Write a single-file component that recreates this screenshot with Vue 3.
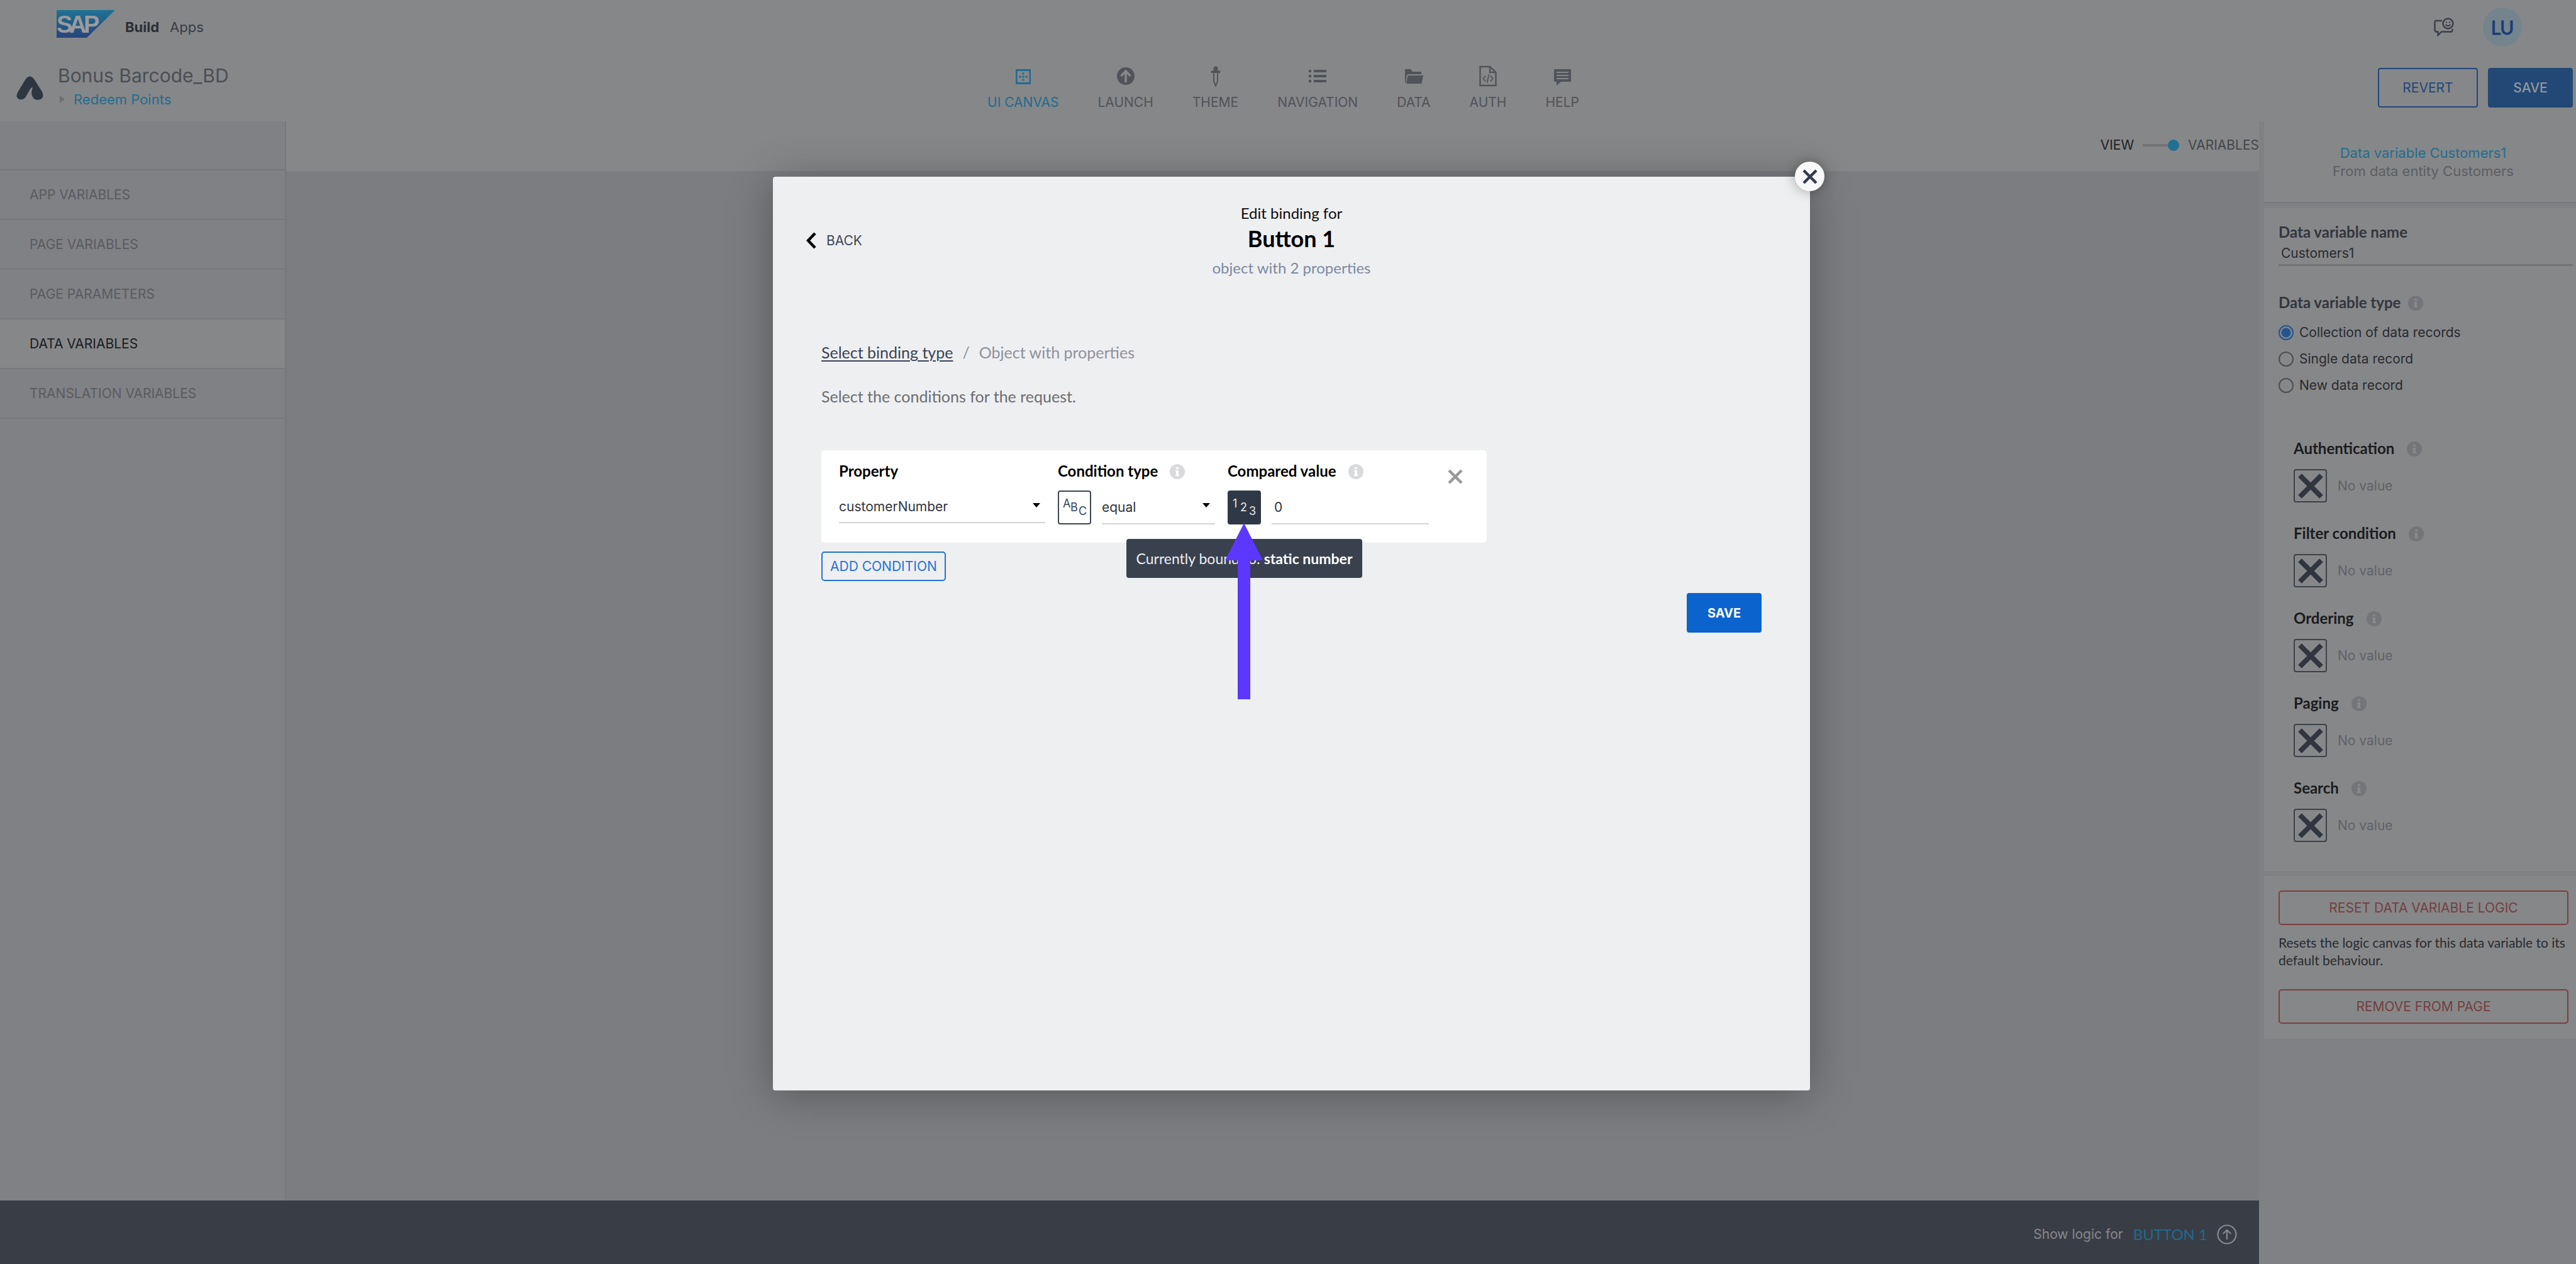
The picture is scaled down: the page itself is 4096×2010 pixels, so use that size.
<script setup>
import { ref } from 'vue'

const navItems = [
  { id: 'canvas', label: 'UI CANVAS', active: true },
  { id: 'launch', label: 'LAUNCH' },
  { id: 'theme', label: 'THEME' },
  { id: 'navigation', label: 'NAVIGATION' },
  { id: 'data', label: 'DATA' },
  { id: 'auth', label: 'AUTH' },
  { id: 'help', label: 'HELP' },
]

const variableKinds = [
  { label: 'APP VARIABLES' },
  { label: 'PAGE VARIABLES' },
  { label: 'PAGE PARAMETERS' },
  { label: 'DATA VARIABLES', active: true },
  { label: 'TRANSLATION VARIABLES' },
]

const recordTypes = ['Collection of data records', 'Single data record', 'New data record']
const bindings = ['Authentication', 'Filter condition', 'Ordering', 'Paging', 'Search']

const variableName = ref('Customers1')
const recordType = ref(recordTypes[0])
const property = ref('customerNumber')
const condition = ref('equal')
const compared = ref('0')
</script>

<template>
  <div class="app">
    <header class="header">
      <div class="topbar">
        <a class="brand" href="#">
          <svg class="sap" viewBox="0 0 93 44" aria-label="SAP">
            <defs>
              <linearGradient id="sapfill" x1="0" y1="0" x2="0" y2="1">
                <stop offset="0" stop-color="#1f7294" />
                <stop offset="1" stop-color="#27447d" />
              </linearGradient>
            </defs>
            <path d="M0 0H93L48 44H0Z" fill="url(#sapfill)" />
            <g class="sap-text"><text x="0" y="36">S</text><text x="20" y="36">A</text><text x="43" y="36">P</text></g>
          </svg>
          <span class="brand-name"><b>Build</b><span>Apps</span></span>
        </a>
        <div class="account">
          <button class="plain" aria-label="Feedback">
            <svg class="feedback" viewBox="0 0 32 30" fill="none" stroke="#3a3f48" stroke-width="2.4">
              <path d="M13 5H4Q1.500 5 1.500 8V19Q1.500 22.500 4 22.500H6.500V28L12 22.500H27Q29.500 22.500 29.500 20V18" />
              <circle cx="22.500" cy="9.500" r="8" />
              <path d="M18.500 11Q22.500 15.500 26.500 11M20 6.500V8.500M25 6.500V8.500" stroke-width="2" />
            </svg>
          </button>
          <button class="avatar">LU</button>
        </div>
      </div>

      <div class="projectbar">
        <div class="project">
          <svg class="mark" viewBox="0 0 43 38">
            <path d="M2 26L14 6Q21.500 -5 29 6L41 25Q45 34 38 37Q31 39.500 27 35Q22 29 26 18Q23 18 21 22L15 33Q11 38.500 5 37Q-2 34 2 26Z" fill="#2e3641" />
          </svg>
          <div class="titles">
            <h1>Bonus Barcode_BD</h1>
            <a href="#"><i class="crumb-arrow"></i>Redeem Points</a>
          </div>
        </div>
        <nav class="nav">
          <a v-for="n in navItems" :key="n.id" href="#" :class="{ active: n.active }">
            <svg viewBox="0 0 34 34" fill="currentColor">
              <template v-if="n.id === 'canvas'">
                <path d="M5 6H29V30H5ZM7.500 9V27H26.500V9Z" fill-rule="evenodd" />
                <path d="M15.500 11.500h3v3h-3zM15.500 16.500h3v3h-3zM15.500 21.500h3v3h-3zM10.500 16.500h3v3h-3zM20.500 16.500h3v3h-3z" />
              </template>
              <template v-else-if="n.id === 'launch'">
                <circle cx="17" cy="17" r="14" />
                <path d="M17 27V9M9.500 17L17 9L24.500 17" fill="none" stroke="#868788" stroke-width="3.500" />
              </template>
              <template v-else-if="n.id === 'theme'">
                <path d="M13.500 5a3.500 3.500 0 0 1 7 0V8.500H24.500V12H9.500V8.500H13.500Z" />
                <path d="M14 12V25L17 32.500L20 25V12" fill="none" stroke="currentColor" stroke-width="2" />
              </template>
              <template v-else-if="n.id === 'navigation'">
                <path d="M3 7h4v4H3zM3 15h4v4H3zM3 23h4v4H3zM11 7h20v4H11zM11 15h20v4H11zM11 23h20v4H11z" />
              </template>
              <template v-else-if="n.id === 'data'">
                <path d="M3 6H12L15 10H29V14H9Q6 14 5.500 17L4 28Q3 28 3 27Z" />
                <path d="M9.500 16H32L29.500 29H5L7 18Q7.500 16 9.500 16Z" />
              </template>
              <template v-else-if="n.id === 'auth'">
                <path d="M4.500 2H20L29.500 11V32H4.500ZM20 2V11H29.500" fill="none" stroke="currentColor" stroke-width="2.400" />
                <path d="M13 16.500L9.500 21L13 25.500M21 16.500L24.500 21L21 25.500M18.500 14.500L15.500 27.500" fill="none" stroke="currentColor" stroke-width="1.800" />
              </template>
              <template v-else>
                <path d="M5 6H30Q31 6 31 7V25Q31 26 30 26H15L8 32V26H5Q4 26 4 25V7Q4 6 5 6ZM8 10V12H27V10ZM8 15V17H27V15ZM8 20V22H27V20Z" fill-rule="evenodd" />
              </template>
            </svg>
            <span>{{ n.label }}</span>
          </a>
        </nav>
        <div class="project-actions">
          <button class="btn-outline">REVERT</button>
          <button class="btn-solid">SAVE</button>
        </div>
      </div>
    </header>

    <div class="workspace">
      <div class="left">
        <div class="stage">
          <aside class="kinds">
            <div class="kinds-head"></div>
            <a v-for="k in variableKinds" :key="k.label" href="#" :class="{ active: k.active }">{{ k.label }}</a>
          </aside>
          <main class="main">
            <div class="toolbar">
              <span class="view">VIEW</span>
              <span class="track"></span><span class="knob"></span>
              <span class="vars">VARIABLES</span>
            </div>
          </main>
        </div>
        <footer class="footer">
          <span class="show">Show logic for</span>
          <a href="#">BUTTON 1</a>
          <svg viewBox="0 0 32 32" fill="none" stroke="#87898c" stroke-width="2.200">
            <circle cx="16" cy="16" r="14.500" />
            <path d="M16 24V9M9.500 15L16 9L22.500 15" />
          </svg>
        </footer>
      </div>

      <aside class="panel">
        <section class="summary">
          <a href="#">Data variable Customers1</a>
          <p>From data entity Customers</p>
        </section>

        <section class="props">
          <label class="field-label" for="varname">Data variable name</label>
          <input id="varname" v-model="variableName" class="name-input" type="text" />
          <h3 class="field-label type-label">Data variable type
            <svg class="info dim" viewBox="0 0 24 24"><circle cx="12" cy="12" r="12" /><path d="M10 5h4v3h-4zM9 10h5v7h1v2H9v-2h1v-5H9z" /></svg>
          </h3>
          <div class="radios">
            <label v-for="r in recordTypes" :key="r"><input v-model="recordType" type="radio" name="rtype" :value="r" />{{ r }}</label>
          </div>
          <div class="bindings">
            <div v-for="b in bindings" :key="b" class="binding">
              <h3>{{ b }}
                <svg class="info dim" viewBox="0 0 24 24"><circle cx="12" cy="12" r="12" /><path d="M10 5h4v3h-4zM9 10h5v7h1v2H9v-2h1v-5H9z" /></svg>
              </h3>
              <div class="binding-row">
                <button class="binding-btn" :aria-label="b">
                  <svg viewBox="0 0 40 40"><path d="M3 3L37 37M37 3L3 37" stroke="#30353f" stroke-width="8" /></svg>
                </button>
                <span>No value</span>
              </div>
            </div>
          </div>
        </section>

        <section class="danger">
          <button>RESET DATA VARIABLE LOGIC</button>
          <p>Resets the logic canvas for this data variable to its default behaviour.</p>
          <button>REMOVE FROM PAGE</button>
        </section>
      </aside>
    </div>

    <div class="backdrop">
      <div class="dialog" role="dialog" aria-labelledby="dlg-title">
        <button class="close" aria-label="Close">
          <svg viewBox="0 0 24 24"><path d="M2 2L22 22M22 2L2 22" stroke="#333a4b" stroke-width="4.500" /></svg>
        </button>
        <div class="dialog-head">
          <button class="back">
            <svg viewBox="0 0 17 27" fill="none" stroke="#000" stroke-width="4.500"><path d="M15 2L4 13.500L15 25" /></svg>
            BACK
          </button>
          <div class="dialog-title">
            <p>Edit binding for</p>
            <h2 id="dlg-title">Button 1</h2>
            <p class="muted">object with 2 properties</p>
          </div>
        </div>
        <div class="dialog-body">
          <div class="crumbs">
            <a href="#">Select binding type</a><span>/</span><span>Object with properties</span>
          </div>
          <p class="lead">Select the conditions for the request.</p>

          <div class="condition">
            <div class="col property">
              <label for="prop">Property</label>
              <div class="select short">
                <select id="prop" v-model="property"><option>customerNumber</option></select>
                <i></i>
              </div>
            </div>
            <div class="col ctype">
              <label for="cond">Condition type
                <svg class="info" viewBox="0 0 24 24"><circle cx="12" cy="12" r="12" /><path d="M10 5h4v3h-4zM9 10h5v7h1v2H9v-2h1v-5H9z" /></svg>
              </label>
              <div class="value-row">
                <button class="type-btn" aria-label="Text binding">
                  <svg viewBox="0 0 53 54"><text x="8" y="27">A</text><text x="20" y="33">B</text><text x="33" y="39">C</text></svg>
                </button>
                <div class="select">
                  <select id="cond" v-model="condition"><option>equal</option></select>
                  <i></i>
                </div>
              </div>
            </div>
            <div class="col compared">
              <label for="cmp">Compared value
                <svg class="info" viewBox="0 0 24 24"><circle cx="12" cy="12" r="12" /><path d="M10 5h4v3h-4zM9 10h5v7h1v2H9v-2h1v-5H9z" /></svg>
              </label>
              <div class="value-row">
                <div class="anchor">
                  <button class="type-btn dark" aria-label="Number binding">
                    <svg viewBox="0 0 53 54"><text x="8" y="27">1</text><text x="20" y="33">2</text><text x="34" y="39">3</text></svg>
                  </button>
                  <div class="tooltip">Currently bound to: <b>static number</b></div>
                  <svg class="pointer" viewBox="0 0 60 280"><path d="M30 0L60 59H40V280H20V59H0Z" fill="#5b37ff" /></svg>
                </div>
                <input id="cmp" v-model="compared" type="text" />
              </div>
            </div>
            <button class="remove" aria-label="Remove condition">
              <svg viewBox="0 0 24 24"><path d="M2 2L22 22M22 2L2 22" stroke="#999" stroke-width="4.500" /></svg>
            </button>
          </div>

          <button class="add">ADD CONDITION</button>
          <div class="dialog-foot"><button class="save">SAVE</button></div>
        </div>
      </div>
    </div>
  </div>
</template>

<style>
body {
  margin: 0;
  background: #7c7d80;
}
</style>

<style scoped>
.app {
  position: relative;
  display: flex;
  flex-direction: column;
  min-height: 100vh;
  font-family: Inter, "Open Sans", sans-serif;
  font-size: 21px;
  line-height: 24px;
  color: #282b31;
}
.app *, .app { box-sizing: border-box; }
h1, h2, h3, p { margin: 0; font-weight: 400; }
button, input, select { font: inherit; color: inherit; margin: 0; padding: 0; }
button { cursor: pointer; background: none; border: 0; }
a { color: inherit; text-decoration: none; }
svg { display: block; flex: none; }

/* header */
.header { background: #868788; color: #50535a; }
.topbar {
  height: 86px;
  padding: 0 86px 0 90px;
  display: flex;
  align-items: center;
  justify-content: space-between;
}
.brand { display: flex; align-items: center; gap: 16px; }
.sap { width: 93px; height: 44px; margin-bottom: 10px; }
.sap-text { font: 700 38px "Liberation Sans", Arial, sans-serif; fill: #9a9b9c; }
.brand-name { display: flex; gap: 17px; font-size: 22px; }
.brand-name b { color: #2b2f38; font-weight: 700; }
.brand-name span { color: #383d47; }
.account { display: flex; align-items: center; gap: 46px; }
.feedback { width: 32px; height: 30px; }
.avatar {
  width: 62px;
  height: 62px;
  border-radius: 50%;
  background: #74848d;
  color: #1c3c76;
  font: 400 30px Lato, sans-serif;
  -webkit-text-stroke: 1px currentColor;
}
.projectbar {
  height: 107px;
  display: grid;
  grid-template-columns: 1fr auto 1fr;
  align-items: center;
}
.project { display: flex; align-items: center; gap: 23px; padding-left: 26px; }
.mark { width: 43px; height: 38px; }
.titles { display: flex; flex-direction: column; gap: 6px; padding-bottom: 2px; }
.titles h1 { font-size: 30px; line-height: 32px; color: #4b4e55; }
.titles a {
  display: flex;
  align-items: center;
  gap: 14px;
  font-size: 22px;
  line-height: 32px;
  color: #246d8f;
}
.crumb-arrow {
  margin-left: 3px;
  border-left: 8px solid #6c6e72;
  border-top: 6px solid transparent;
  border-bottom: 6px solid transparent;
}
.nav { display: flex; gap: 62px; margin-right: 15px; }
.nav a { display: flex; flex-direction: column; align-items: center; gap: 13px; }
.nav svg { width: 34px; height: 34px; }
.nav .active { color: #1f6c90; }
.project-actions { display: flex; justify-content: flex-end; gap: 16px; padding-right: 5px; }
.btn-outline, .btn-solid { height: 63px; border-radius: 4px; }
.btn-outline { width: 159px; border: 2px solid #22477b; color: #22477b; }
.btn-solid { width: 135px; background: #224875; color: #93979c; font-weight: 500; }

/* workspace */
.workspace { flex: 1; display: grid; grid-template-columns: 1fr 504px; }
.left { display: flex; flex-direction: column; }
.stage { flex: 1; display: flex; }
.kinds { width: 455px; background: #808184; border-right: 2px solid #77787b; color: #595b61; }
.kinds-head { height: 78px; border-bottom: 2px solid #77787b; }
.kinds a {
  display: flex;
  align-items: center;
  height: 79px;
  padding-left: 47px;
  border-bottom: 2px solid #77787b;
}
.kinds .active { background: #868788; color: #1a1c22; }
.main { flex: 1; background: #7c7d80; }
.toolbar {
  height: 79px;
  padding-bottom: 3px;
  background: #868788;
  display: flex;
  align-items: center;
  justify-content: flex-end;
}
.view { color: #202227; }
.vars { color: #43464c; }
.track { width: 40px; height: 4px; margin-left: 14px; background: #727375; }
.knob { width: 18px; height: 18px; margin-right: 14px; border-radius: 50%; background: #1f7092; }
.footer {
  height: 101px;
  padding: 6px 35px 0 0;
  background: #393d46;
  display: flex;
  align-items: center;
  justify-content: flex-end;
}
.show { color: #87898c; margin-right: 16px; }
.footer a { font: 400 24px/24px Lato, sans-serif; color: #206a8c; margin-right: 15px; }
.footer svg { width: 32px; height: 32px; }

/* right panel */
.panel { padding-left: 8px; background: #808184; display: flex; flex-direction: column; gap: 8px; }
.panel section { background: #868788; }
.panel .summary {
  padding: 36px 0 34px 10px;
  border-bottom: 2px solid #78797b;
  font-size: 22px;
  line-height: 29px;
  text-align: center;
}
.summary a { color: #246d8f; }
.summary p { color: #5c5e63; }
.props { display: flex; flex-direction: column; padding: 23px 5px 46px 23px; }
.field-label, .binding h3 {
  display: flex;
  align-items: center;
  font: 700 24px/30px Lato, sans-serif;
  color: #32363e;
}
.type-label { gap: 12px; margin-top: 43px; }
.name-input {
  height: 39px;
  padding: 0 4px;
  border: 0;
  border-bottom: 3px solid #717275;
  background: none;
}
.info { width: 24px; height: 24px; fill: #d9dadd; margin-top: 2px; }
.info path { fill: #fff; }
.info.dim { fill: #747579; }
.info.dim path { fill: #88898b; }
.radios { margin-top: 12px; }
.radios label { display: flex; align-items: center; gap: 9px; height: 42px; }
.radios input {
  appearance: none;
  width: 24px;
  height: 24px;
  border: 2px solid #4c4e53;
  border-radius: 50%;
}
.radios input:checked {
  border-color: #22558f;
  background: radial-gradient(circle, #22558f 7px, transparent 8px);
}
.bindings {
  margin: 64px 0 0 24px;
  display: flex;
  flex-direction: column;
  gap: 34px;
}
.binding h3 { gap: 20px; color: #1a1c20; }
.binding-row { display: flex; align-items: center; gap: 17px; margin-top: 18px; color: #5f6268; }
.binding-btn {
  width: 53px;
  height: 53px;
  display: grid;
  place-items: center;
  border: 2px solid #3d4148;
  border-radius: 4px;
}
.binding-btn svg { width: 40px; height: 40px; }
.danger { display: flex; flex-direction: column; padding: 23px 12px 24px 23px; }
.danger button { height: 55px; border: 2px solid #7b3f40; border-radius: 5px; color: #733f42; }
.danger p { margin: 14px 0 32px; font: 400 21px/28px Lato, sans-serif; }

/* dialog */
.backdrop {
  position: absolute;
  inset: 0;
  display: flex;
  padding: 281px 1218px 276px 1229px;
}
.dialog {
  position: relative;
  flex: 1;
  background: #eeeff1;
  border-radius: 4px;
  box-shadow: 0 6px 70px rgba(0, 0, 0, 0.3);
  font-family: Lato, sans-serif;
  font-size: 24px;
  line-height: 32px;
  color: #0c0c0e;
}
.close {
  position: absolute;
  top: -24px;
  right: -23px;
  width: 47px;
  height: 47px;
  display: grid;
  place-items: center;
  border-radius: 50%;
  background: #f8f8f8;
  box-shadow: 0 0 20px rgba(0, 0, 0, 0.35);
}
.close svg { width: 24px; height: 24px; }
.dialog-head {
  display: grid;
  grid-template-columns: 1fr auto 1fr;
  align-items: center;
  padding-top: 42px;
}
.back {
  justify-self: start;
  display: flex;
  align-items: center;
  gap: 16px;
  margin-left: 52px;
  font: 400 21px/24px Inter, sans-serif;
  color: #3d4656;
}
.back svg { width: 17px; height: 27px; }
.dialog-title { text-align: center; }
.dialog-title h2 { font-size: 36px; line-height: 48px; font-weight: 700; color: #000; }
.dialog-title .muted { margin-top: 7px; color: #7c89a3; }
.dialog-body { padding: 102px 77px 0; display: flex; flex-direction: column; align-items: flex-start; }
.crumbs { display: flex; gap: 15px; font-size: 25px; color: #8f929b; }
.crumbs a { color: #3a4355; text-decoration: underline; text-underline-offset: 3px; text-decoration-thickness: 2px; }
.lead { margin-top: 38px; font-size: 25px; color: #6b6d70; }
.condition {
  display: flex;
  align-items: flex-start;
  margin-top: 70px;
  padding: 18px 38px 29px 28px;
  background: #fff;
  border-radius: 5px;
}
.col { margin-right: 20px; }
.property { width: 328px; }
.ctype { width: 250px; }
.compared { width: 320px; margin-right: 30px; }
.col label { display: flex; align-items: center; gap: 19px; font-weight: 700; line-height: 30px; margin-bottom: 16px; color: #000; }
.value-row { display: flex; gap: 17px; height: 54px; }
.type-btn { width: 53px; height: 54px; border: 2px solid #3c4657; border-radius: 4px; }
.type-btn svg { width: 53px; height: 54px; margin: -2px; fill: #3c4657; }
.type-btn text { font: 400 18px Inter, sans-serif; }
.type-btn.dark { background: #2f3847; border-color: #2f3847; }
.type-btn.dark svg { fill: #e8eaee; }
.select { position: relative; flex: 1; display: flex; height: 54px; }
.select.short { height: 52px; }
.select select, .value-row > input {
  appearance: none;
  flex: 1;
  min-width: 0;
  width: 100%;
  background: none;
  border: 0;
  border-bottom: 2px solid #d3d4d6;
  border-radius: 0;
  font: 400 21px Inter, sans-serif;
  color: #33353a;
}
.value-row > input { padding-left: 4px; }
.select i {
  position: absolute;
  right: 8px;
  top: 20px;
  border-top: 7px solid #000;
  border-left: 6px solid transparent;
  border-right: 6px solid transparent;
}
.anchor { position: relative; }
.tooltip {
  position: absolute;
  top: 77px;
  left: 50%;
  transform: translateX(-50%);
  padding: 0 16px;
  line-height: 62px;
  white-space: nowrap;
  background: #3a414e;
  border-radius: 4px;
  color: #eceef1;
  font-size: 23px;
}
.tooltip b { color: #fff; }
.pointer { position: absolute; top: 52px; left: -4px; width: 60px; height: 280px; }
.remove { margin-top: 12px; }
.remove svg { width: 24px; height: 24px; }
.add {
  height: 47px;
  padding: 0 12px;
  margin-top: 14px;
  border: 2px solid #2272d9;
  border-radius: 5px;
  font: 400 21px Inter, sans-serif;
  color: #2272d9;
}
.dialog-foot { align-self: flex-end; margin-top: 19px; }
.save {
  width: 119px;
  height: 63px;
  display: block;
  background: #0b63ce;
  border-radius: 4px;
  color: #fff;
  font: 700 20px Inter, sans-serif;
}
</style>
